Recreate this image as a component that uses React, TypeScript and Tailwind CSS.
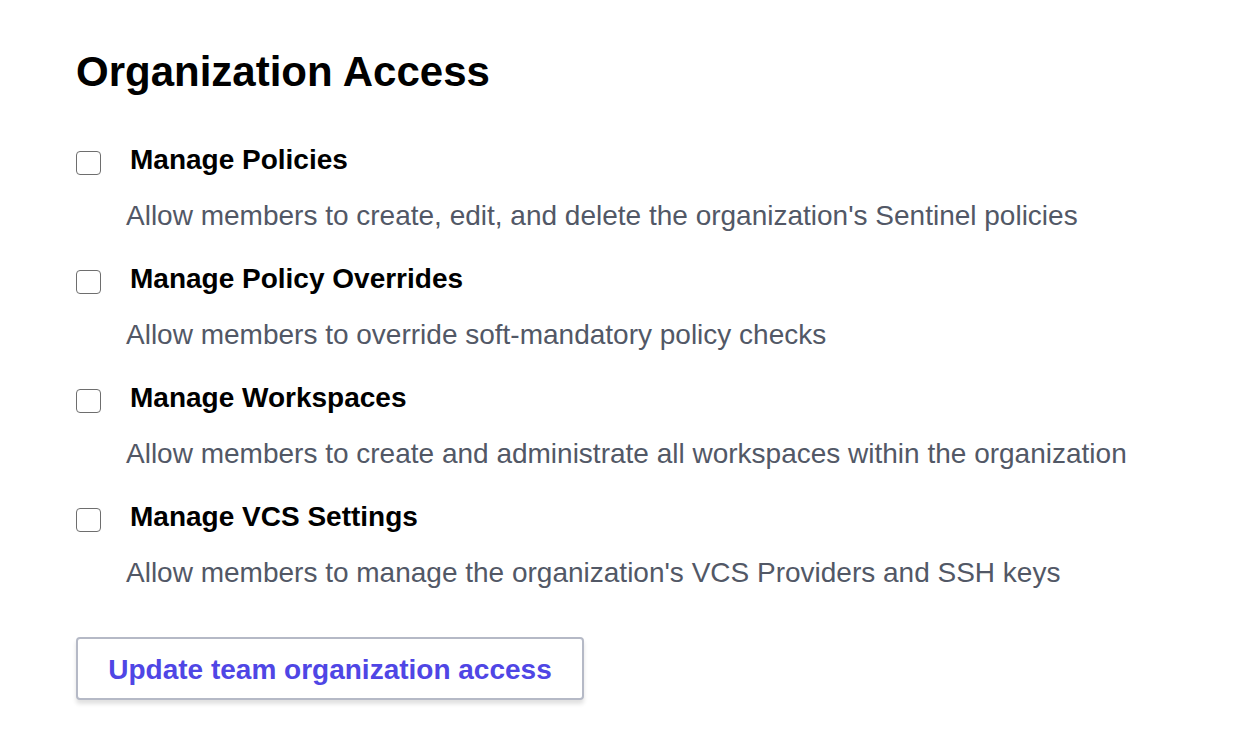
import React from "react";

const items = [
  { title: "Manage Policies", desc: "Allow members to create, edit, and delete the organization's Sentinel policies" },
  { title: "Manage Policy Overrides", desc: "Allow members to override soft-mandatory policy checks" },
  { title: "Manage Workspaces", desc: "Allow members to create and administrate all workspaces within the organization" },
  { title: "Manage VCS Settings", desc: "Allow members to manage the organization's VCS Providers and SSH keys" },
];

export default function App() {
  return (
    <div className="min-h-[750px] w-[1260px] bg-white" style={{ fontFamily: '"Liberation Sans", Arial, sans-serif' }}>
      <div className="pl-[76px] pt-[49px]">
        <h1 className="text-[42px] font-bold leading-[46px] text-black">Organization Access</h1>
        <div className="mt-[50px] flex flex-col">
          {items.map((it) => (
            <div key={it.title} className="mb-[33px]">
              <label className="flex items-center h-[30px]">
                <span className="mt-[6px] block h-[24px] w-[25px] rounded-[4px] border-[1.5px] border-[#6e6e6e] bg-white" />
                <span className="ml-[29px] text-[28px] font-bold leading-[30px] text-black">{it.title}</span>
              </label>
              <p className="ml-[50px] mt-[26px] text-[28px] leading-[30px] text-[#525866]">{it.desc}</p>
            </div>
          ))}
        </div>
        <button className="mt-[16px] h-[63px] w-[508px] rounded-[4px] border-2 border-[#b5b9c6] bg-white pt-[3px] text-[28px] font-bold text-[#4f46e5] shadow-[0_4px_4px_rgba(0,0,0,0.12)]">
          Update team organization access
        </button>
      </div>
    </div>
  );
}
